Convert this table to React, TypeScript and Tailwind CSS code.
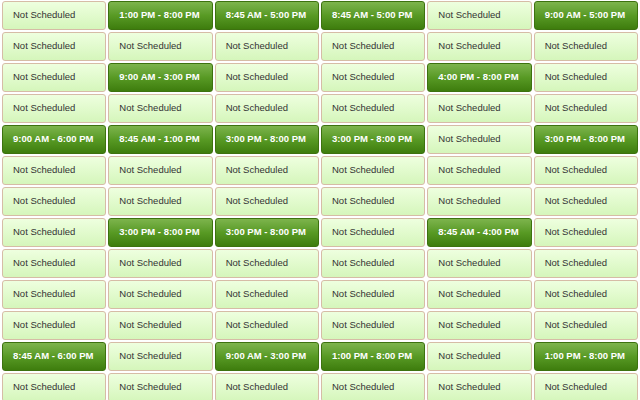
import React from "react";

const NS = "Not Scheduled";
const rows: string[][] = [
  [NS, "1:00 PM - 8:00 PM", "8:45 AM - 5:00 PM", "8:45 AM - 5:00 PM", NS, "9:00 AM - 5:00 PM"],
  [NS, NS, NS, NS, NS, NS],
  [NS, "9:00 AM - 3:00 PM", NS, NS, "4:00 PM - 8:00 PM", NS],
  [NS, NS, NS, NS, NS, NS],
  ["9:00 AM - 6:00 PM", "8:45 AM - 1:00 PM", "3:00 PM - 8:00 PM", "3:00 PM - 8:00 PM", NS, "3:00 PM - 8:00 PM"],
  [NS, NS, NS, NS, NS, NS],
  [NS, NS, NS, NS, NS, NS],
  [NS, "3:00 PM - 8:00 PM", "3:00 PM - 8:00 PM", NS, "8:45 AM - 4:00 PM", NS],
  [NS, NS, NS, NS, NS, NS],
  [NS, NS, NS, NS, NS, NS],
  [NS, NS, NS, NS, NS, NS],
  ["8:45 AM - 6:00 PM", NS, "9:00 AM - 3:00 PM", "1:00 PM - 8:00 PM", NS, "1:00 PM - 8:00 PM"],
  [NS, NS, NS, NS, NS, NS],
];

export default function App() {
  return (
    <div className="w-[640px] h-[400px] overflow-hidden bg-white font-['Liberation_Sans',Arial,sans-serif]">
      <div className="grid grid-cols-6 gap-[2px] px-[2px] pt-[1px] auto-rows-[29px]">
        {rows.flat().map((t, i) =>
          t === NS ? (
            <div
              key={i}
              className="flex items-center pl-[10px] rounded-[3px] border border-[#d6bca6] bg-gradient-to-b from-[#eeffdf] to-[#d5f6bb] text-[9.5px] text-[#333333]"
            >
              {t}
            </div>
          ) : (
            <div
              key={i}
              className="flex items-center pl-[10px] rounded-[3px] border border-[#3d720f] bg-gradient-to-b from-[#7db44c] via-[#589a24] to-[#3e7d0d] text-[9.5px] font-bold text-white"
            >
              {t}
            </div>
          )
        )}
      </div>
    </div>
  );
}
